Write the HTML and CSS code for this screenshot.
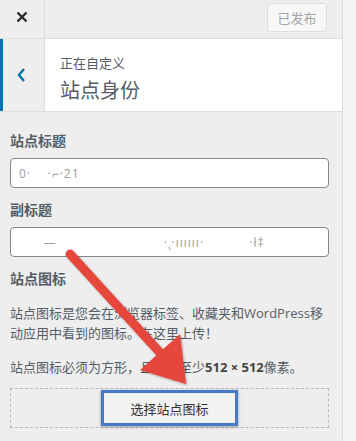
FILE: index.html
```html
<!DOCTYPE html>
<html lang="zh-CN">

<head>
    <meta charset="UTF-8">
    <meta name="viewport" content="width=device-width, initial-scale=1.0">
    <title>站点身份</title>
    <link rel="stylesheet" href="styles.css">
</head>

<body class="page">
    <div class="sidebar">
        <!-- Barra superior -->
        <div class="topbar">
            <button class="topbar__close">
                <svg width="12" height="12" viewBox="0 0 12 12">
                    <path d="M1.5 1.5 L10.5 10.5 M10.5 1.5 L1.5 10.5" stroke="#2c2c2c" stroke-width="2.4" />
                </svg>
            </button>
            <div class="topbar__actions">
                <button class="btn-publish" disabled>已发布</button>
            </div>
        </div>

        <!-- Cabecera -->
        <div class="panel-head">
            <button class="panel-head__back">
                <svg width="10" height="16" viewBox="0 0 10 16">
                    <path d="M8 2 L3 8 L8 14" fill="none" stroke="#0073aa" stroke-width="2.4" />
                </svg>
            </button>
            <div class="panel-head__title">
                <span class="panel-head__small">正在自定义</span>
                <h2 class="panel-head__h2">站点身份</h2>
            </div>
        </div>

        <!-- Controles -->
        <div class="controls">
            <label class="control__label">站点标题</label>
            <div class="field"><span class="field__blur">0·&nbsp;&nbsp;&nbsp;&nbsp;·⌐·21</span></div>

            <label class="control__label">副标题</label>
            <div class="field"><span class="field__blur">&nbsp;&nbsp;&nbsp;&nbsp;&nbsp;&nbsp;—&nbsp;&nbsp;&nbsp;&nbsp;&nbsp;&nbsp;&nbsp;&nbsp;&nbsp;&nbsp;&nbsp;&nbsp;&nbsp;&nbsp;&nbsp;&nbsp;&nbsp;&nbsp;&nbsp;&nbsp;&nbsp;&nbsp;&nbsp;&nbsp;&nbsp;&nbsp;·¸·ıııııı·&nbsp;&nbsp;&nbsp;&nbsp;&nbsp;&nbsp;&nbsp;&nbsp;&nbsp;&nbsp;&nbsp;·ł‡</span></div>

            <label class="control__label">站点图标</label>
            <p class="control__desc">站点图标是您会在浏览器标签、收藏夹和WordPress移动应用中看到的图标。在这里上传！</p>
            <p class="control__desc">站点图标必须为方形，且宽高至少<b>512 × 512</b>像素。</p>

            <div class="placeholder">
                <button class="btn-select">选择站点图标</button>
            </div>
        </div>
    </div>
    <div class="preview"></div>

    <!-- flecha roja -->
    <svg class="arrow" width="356" height="441" viewBox="0 0 356 441">
        <defs>
            <filter id="sombra" x="-20%" y="-20%" width="140%" height="140%">
                <feDropShadow dx="1" dy="1" stdDeviation="1.2" flood-color="#000" flood-opacity="0.35" />
            </filter>
        </defs>
        <g filter="url(#sombra)">
            <line x1="70" y1="254" x2="163" y2="356" stroke="#e5463c" stroke-width="9" stroke-linecap="round" />
            <polygon points="186,384 140,370 180,334" fill="#e5463c" />
        </g>
    </svg>
</body>

</html>
```

FILE: styles.css
```css
* {
    padding: 0;
    margin: 0;
    box-sizing: border-box;
}

.page {
    display: flex;
    width: 356px;
    height: 441px;
    overflow: hidden;
    position: relative;
    font-family: "Open Sans", "Noto Sans CJK SC", sans-serif;
    background-color: #f1f1f1;
    color: #555d66;
}

/* Sidebar */
.sidebar {
    width: 343px;
    flex-shrink: 0;
    background-color: #eeeeee;
    border-right: 1px solid #dddddd;
}

.preview {
    flex: 1;
    background-color: #f3f3f3;
}

/* Barra superior */
.topbar {
    display: flex;
    height: 39px;
    border-bottom: 1px solid #dddddd;
}

.topbar__close {
    width: 45px;
    height: 38px;
    border: none;
    border-right: 1px solid #dddddd;
    background: transparent;
    display: flex;
    align-items: center;
    justify-content: center;
    padding-bottom: 5px;
}

.topbar__actions {
    flex: 1;
    display: flex;
    justify-content: flex-end;
    padding: 3px 15px 0 0;
}

.btn-publish {
    width: 60px;
    height: 29px;
    border: 1px solid #dddddd;
    border-radius: 3px;
    background-color: #f7f7f7;
    color: #a0a5aa;
    font-size: 13px;
    font-family: "Noto Sans CJK SC", sans-serif;
}

/* Cabecera */
.panel-head {
    display: flex;
    height: 73px;
    background-color: #ffffff;
    border-bottom: 1px solid #dddddd;
}

.panel-head__back {
    width: 45px;
    border: none;
    border-left: 3px solid #0073aa;
    border-right: 1px solid #dddddd;
    background-color: #eeeeee;
    display: flex;
    align-items: center;
    justify-content: center;
    padding-right: 5px;
}

.panel-head__title {
    padding: 15px 0 0 15px;
    display: flex;
    flex-direction: column;
}

.panel-head__small {
    font-size: 13px;
    line-height: 18px;
    color: #555d66;
    font-family: "Noto Sans CJK SC", sans-serif;
}

.panel-head__h2 {
    margin-top: 3px;
    font-size: 20px;
    font-weight: normal;
    line-height: 30px;
    color: #555d66;
    font-family: "Noto Sans CJK SC", sans-serif;
}

/* Controles */
.controls {
    padding: 18px 13px 0 10px;
    display: flex;
    flex-direction: column;
}

.control__label {
    font-size: 14px;
    font-weight: bold;
    line-height: 22px;
    color: #555d66;
    margin-bottom: 6px;
}

.field {
    height: 30px;
    background-color: #ffffff;
    border: 1px solid #7e8993;
    border-radius: 4px;
    margin-bottom: 11px;
    padding: 0 8px;
    display: flex;
    align-items: center;
}

.field__blur {
    font-size: 12px;
    color: #9aa0a6;
    white-space: pre;
    letter-spacing: 1px;
}

.control__desc {
    font-size: 13px;
    line-height: 20px;
    color: #555d66;
    margin-top: 7px;
    margin-bottom: 7px;
}

.control__desc b {
    color: #444;
}

.placeholder {
    margin-top: 4px;
    height: 40px;
    border: 1px dashed #b4b9be;
    display: flex;
    justify-content: center;
    align-items: center;
}

.btn-select {
    width: 137px;
    height: 36px;
    border: 3px solid #4a78c8;
    background-color: #f2f2f2;
    box-shadow: 0 1px 3px rgba(0, 0, 0, 0.35);
    font-size: 13px;
    color: #333;
    font-family: "Noto Sans CJK SC", sans-serif;
}

/* Flecha */
.arrow {
    position: absolute;
    left: 0;
    top: 0;
    pointer-events: none;
}
```
